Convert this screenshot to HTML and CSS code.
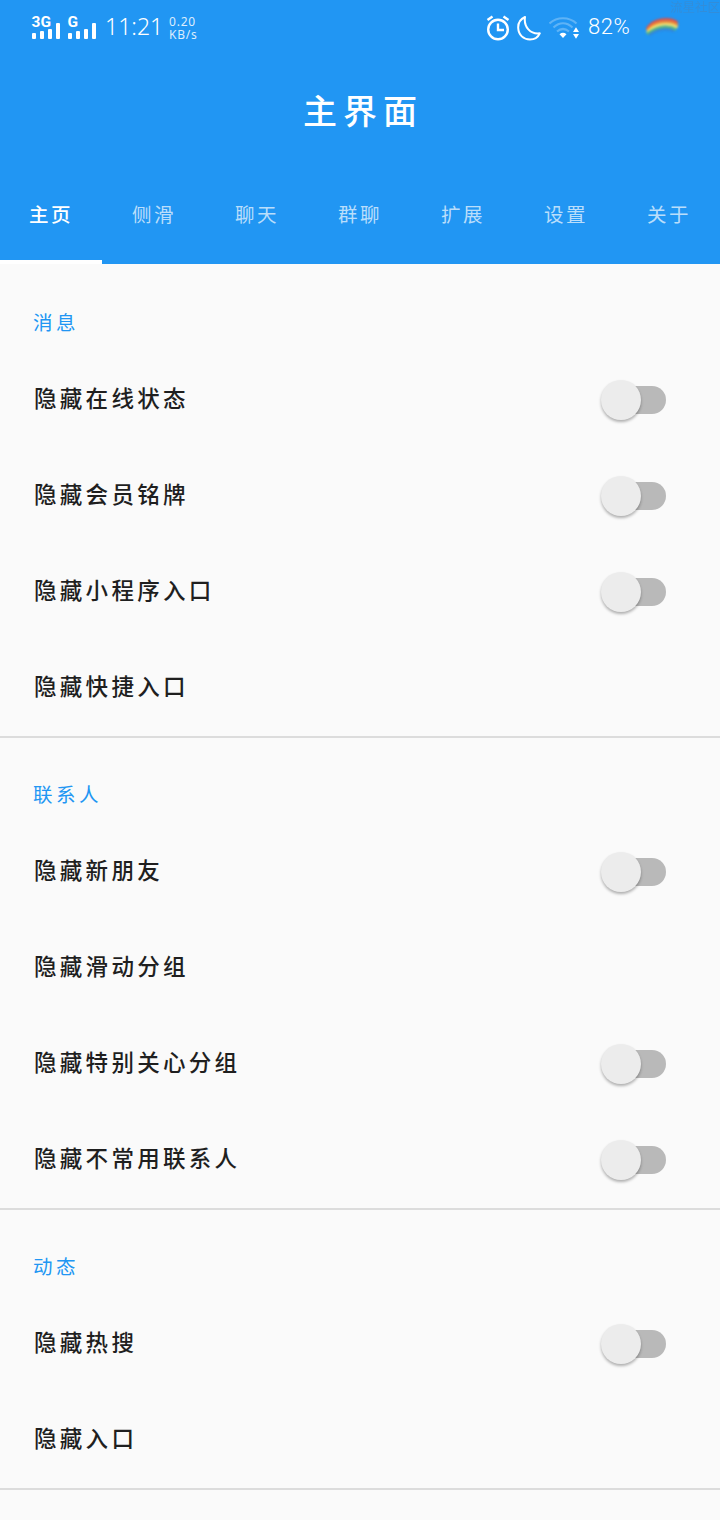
FILE: index.html
```html
<!DOCTYPE html>
<html lang="zh-CN">
<head>
  <meta charset="UTF-8" />
  <meta name="viewport" content="width=device-width, initial-scale=1.0"/>
  <title>主界面</title>
  <link rel="stylesheet" href="styles.css">
</head>
<body>
<header class="app-header">
  <!-- Status bar -->
  <div class="status-bar">
    <svg class="signal" width="66" height="34" viewBox="0 0 66 34" fill="#fff">
      <text x="-0.500" y="16" class="net">3G</text>
      <text x="35.500" y="16" class="net">G</text>
      <rect x="0" y="22" width="4" height="6" rx="1"/>
      <rect x="8" y="20" width="4" height="8" rx="1"/>
      <rect x="16" y="18" width="4" height="10" rx="1"/>
      <rect x="24" y="12" width="4" height="16" rx="1"/>
      <rect x="36" y="22" width="4" height="6" rx="1"/>
      <rect x="44" y="20" width="4" height="8" rx="1"/>
      <rect x="52" y="18" width="4" height="10" rx="1"/>
      <rect x="60" y="12" width="4" height="16" rx="1"/>
    </svg>
    <span class="clock">11:21</span>
    <span class="speed">0.20<br>KB/s</span>
    <div class="status-right">
      <svg width="24" height="26" viewBox="0 0 24 26" fill="none" stroke="#fff" stroke-width="2.4">
        <circle cx="12" cy="14.500" r="9.800"/>
        <path d="M12 8.500v6.500h6M1.500 5l5-3.500M22.500 5l-5-3.500"/>
      </svg>
      <svg class="moon" width="24" height="26" viewBox="0 0 24 26" fill="none" stroke="#fff" stroke-width="2" stroke-linejoin="round">
        <path d="M8 2C3.500 4 1 8 1.200 13C1.500 20 6.500 24.500 13 24.500C17.500 24.500 21 22.300 22.800 18.300C13.500 19.500 6.500 12 8 2Z"/>
      </svg>
      <svg class="wifi" width="31" height="26" viewBox="0 0 31 26" fill="none" stroke="#fff">
        <g stroke-width="2.200" stroke-opacity=".28">
          <path d="M.5 8.500C8 1.500 20 1.500 27.500 8.500M4.500 12.500C10.500 7 17.500 7 23.500 12.500M8 16.500Q14 11.500 20 16.500"/>
        </g>
        <path d="M10.500 19.200Q14 16.300 17.500 19.200L14 23ZM24 17l3-4.800 3 4.800ZM24 19l3 4.800 3-4.800Z" fill="#fff" stroke="none"/>
      </svg>
      <span class="battery">82%</span>
      <svg class="rainbow" width="36" height="24" viewBox="0 0 36 24" fill="none" stroke-width="2.600">
        <path d="M3 13C9 2.500 25 1 33.500 6.500" stroke="#dc5148"/>
        <path d="M3 14.500C10 5 25 3.500 34 9" stroke="#f08a38"/>
        <path d="M3 16.500C11 7.500 25 6 33.500 11.500" stroke="#f5e26b"/>
        <path d="M3 18C12 10.500 24 9 32 13.500" stroke="#55b886"/>
        <path d="M5 19C13 13 23 11.500 30 15" stroke="#4475c4" stroke-opacity=".5"/>
      </svg>
    </div>
    <span class="watermark">流星社区</span>
  </div>
  <h1 class="app-title">主界面</h1>
  <nav class="tabs">
    <a class="tab active">主页</a>
    <a class="tab">侧滑</a>
    <a class="tab">聊天</a>
    <a class="tab">群聊</a>
    <a class="tab">扩展</a>
    <a class="tab">设置</a>
    <a class="tab">关于</a>
  </nav>
</header>

<main>
  <section class="group">
    <h2 class="group-title">消息</h2>
    <div class="row"><span>隐藏在线状态</span><i class="switch"></i></div>
    <div class="row"><span>隐藏会员铭牌</span><i class="switch"></i></div>
    <div class="row"><span>隐藏小程序入口</span><i class="switch"></i></div>
    <div class="row"><span>隐藏快捷入口</span></div>
  </section>
  <section class="group">
    <h2 class="group-title">联系人</h2>
    <div class="row"><span>隐藏新朋友</span><i class="switch"></i></div>
    <div class="row"><span>隐藏滑动分组</span></div>
    <div class="row"><span>隐藏特别关心分组</span><i class="switch"></i></div>
    <div class="row"><span>隐藏不常用联系人</span><i class="switch"></i></div>
  </section>
  <section class="group">
    <h2 class="group-title">动态</h2>
    <div class="row"><span>隐藏热搜</span><i class="switch"></i></div>
    <div class="row"><span>隐藏入口</span></div>
  </section>
  <section class="group"></section>
</main>
</body>
</html>
```
FILE: styles.css
```css
:root {
  --blue: #2196f3;
  --page: #fafafa;
  --text: #1f1f1f;
}
* { box-sizing: border-box; margin: 0; padding: 0; }
body {
  height: 1520px;
  overflow: hidden;
  background: var(--page);
  color: var(--text);
  font-family: "Noto Sans CJK SC", sans-serif;
}
.app-header {
  height: 264px;
  background: var(--blue);
  color: #fff;
  display: flex;
  flex-direction: column;
}

/* status bar */
.status-bar {
  position: relative;
  height: 56px;
  padding: 0 40px 0 32px;
  display: flex;
  align-items: center;
  font-family: Roboto, sans-serif;
}
.net { font: 700 15.5px Roboto, sans-serif; }
.signal { overflow: visible; }
.clock {
  margin: -4px 0 0 7px;
  width: 64px;
  font-family: "Noto Sans", sans-serif;
  font-size: 23px;
  font-weight: 300;
  line-height: 1;
  white-space: nowrap;
}
.speed {
  font-family: "Noto Sans", sans-serif;
  font-size: 12px;
  font-weight: 400;
  line-height: 13px;
  letter-spacing: 0.8px;
  color: rgba(255, 255, 255, 0.85);
}
.status-right {
  margin-left: auto;
  display: flex;
  align-items: center;
}
.moon { margin-left: 7px; }
.wifi { margin-left: 8px; }
.battery {
  margin: -2px 0 0 8px;
  width: 43px;
  font-size: 22px;
  font-weight: 300;
  line-height: 1;
  letter-spacing: 0.5px;
}
.rainbow { margin-left: 13px; filter: blur(0.8px); }
.watermark {
  position: absolute;
  top: 0;
  right: 0;
  font-family: "Noto Sans CJK SC", sans-serif;
  font-size: 12.5px;
  line-height: 14px;
  color: #3e88c9;
  opacity: 0.6;
}

.app-title {
  height: 112px;
  padding-left: 6px;
  text-align: center;
  font-size: 34px;
  font-weight: 500;
  line-height: 107px;
  letter-spacing: 6px;
}

/* tabs */
.tabs { height: 96px; display: flex; justify-content: space-between; }
.tab {
  flex: 0 0 102px;
  margin-right: 1px;
  text-align: center;
  font-size: 19.5px;
  line-height: 92px;
  letter-spacing: 2.5px;
  color: rgba(255, 255, 255, 0.7);
}
.tab.active { color: #fff; font-weight: 500; border-bottom: 4px solid #fff; }

/* settings list */
.group-title {
  height: 88px;
  padding: 44px 33px 0;
  font-size: 19.5px;
  font-weight: 400;
  line-height: 28px;
  letter-spacing: 3.5px;
  color: var(--blue);
}
.group + .group { border-top: 2px solid #dcdcdc; }
.group + .group .group-title { height: 86px; padding-top: 42px; }
.row {
  height: 96px;
  padding: 0 54px 0 34px;
  display: flex;
  align-items: center;
  justify-content: space-between;
  font-size: 22.5px;
  font-weight: 500;
  letter-spacing: 3.3px;
}
.row span { padding-bottom: 6px; }
.switch {
  width: 65px;
  height: 40px;
  display: flex;
  align-items: center;
}
.switch::before {
  content: '';
  z-index: 1;
  flex: 0 0 40px;
  height: 40px;
  border-radius: 50%;
  background: #ececec;
  box-shadow: 0 2px 3px rgba(0, 0, 0, 0.3);
}
.switch::after {
  content: '';
  flex: 0 0 45px;
  height: 28px;
  margin-left: -20px;
  border-radius: 14px;
  background: #b9b9b9;
}
```
